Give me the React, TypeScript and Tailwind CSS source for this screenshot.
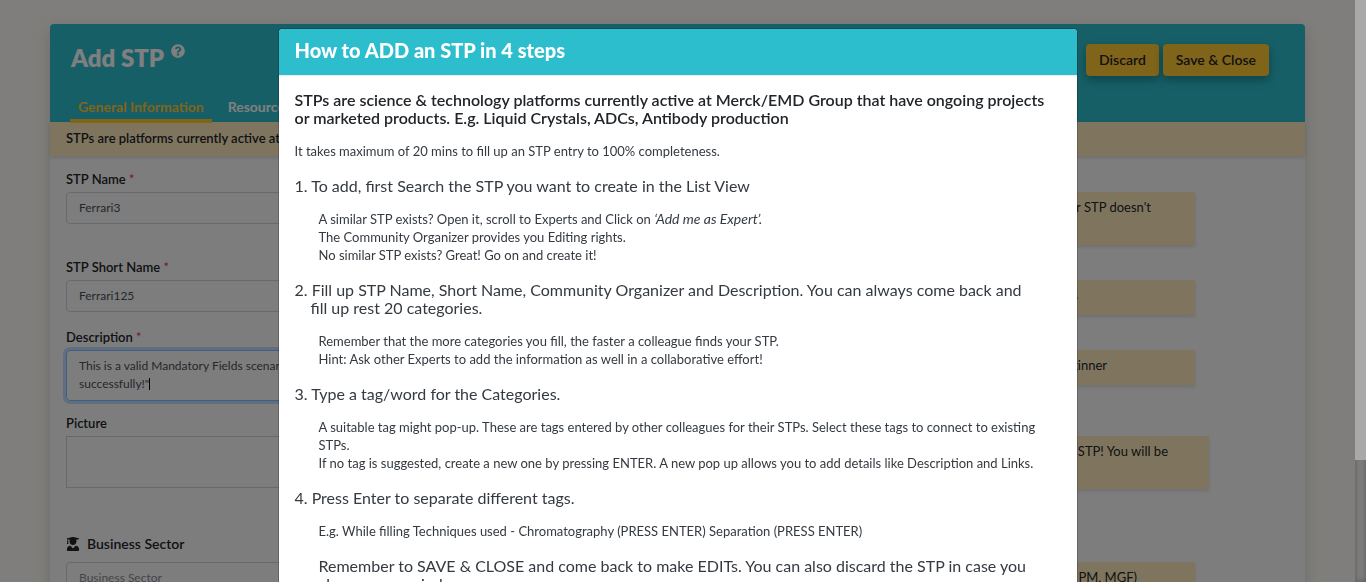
import { useId, type ReactNode } from "react";
import { FaQuestionCircle, FaUserGraduate } from "react-icons/fa";

function Hint({ children, className }: { children: ReactNode; className: string }) {
  return (
    <div className={`ml-8 flex-1 self-start bg-[#ffebbf] pt-[6px] pb-[11px] text-right leading-[18px] text-[#212529] shadow-[0_2px_4px_rgba(0,0,0,0.12)] ${className}`}>
      {children}
    </div>
  );
}

function Field({
  label,
  required,
  hint,
  className = "pr-[110px]",
  children,
}: {
  label: string;
  required?: boolean;
  hint?: ReactNode;
  className?: string;
  children: (id: string) => ReactNode;
}) {
  const id = useId();
  return (
    <div className={className}>
      <label htmlFor={id} className="mb-1 block leading-[18px] font-semibold text-[#212529]">
        {label} {required && <span className="font-normal text-[#dc3545]">*</span>}
      </label>
      <div className="flex">
        <div className="w-1/2">{children(id)}</div>
        {hint}
      </div>
    </div>
  );
}

const control =
  "block h-8 w-full rounded border border-[#ced4da] bg-transparent px-3 pb-px text-[12px] leading-[18px] text-[#495057] outline-none placeholder:text-[#868e96]";

function Step({ title, children }: { title: ReactNode; children: ReactNode }) {
  return (
    <li>
      <h3 className="mb-[15px] pr-6 pl-4 -indent-4 text-[16px] leading-[18px]">{title}</h3>
      <div className="mb-[17px] pl-6 leading-[18px]">{children}</div>
    </li>
  );
}

export default function App() {
  return (
    <div className="h-screen overflow-hidden bg-[#fffdf8] font-['Lato',sans-serif] text-[13px]">
      <main className="mr-[11px] px-[50px] pt-6">
        <div className="rounded bg-[#fbfbfb] shadow-[0_4px_16px_rgba(0,0,0,0.15)]">
          <header className="flex h-[98px] flex-col justify-between rounded-t bg-[#2dbecd]">
            <div className="flex items-start justify-between pt-5 pr-9 pl-[21px]">
              <h1 className="flex text-[24px] leading-7 font-extrabold text-white">
                Add STP
                <button aria-label="Help" className="ml-[7px] h-[14px]">
                  <FaQuestionCircle size={14} className="block" />
                </button>
              </h1>
              <div className="flex gap-1">
                <button className="h-8 rounded bg-[#ffc832] px-[13px] pb-[2px] text-[14px] font-semibold text-[#212529] shadow-[0_4px_10px_rgba(0,0,0,0.3)]">
                  Discard
                </button>
                <button className="h-8 rounded bg-[#ffc832] px-[13px] pb-[2px] text-[14px] font-semibold text-[#212529] shadow-[0_4px_10px_rgba(0,0,0,0.3)]">
                  Save &amp; Close
                </button>
              </div>
            </div>
            <nav className="-mb-px flex gap-2 pl-5 text-[14px] leading-[18px] font-bold">
              <a href="#general" className="border-b-4 border-[#ffc832] px-2 pb-[3px] text-[#ffc832]">
                General Information
              </a>
              <a href="#resources" className="px-2 text-white">
                Resources
              </a>
            </nav>
          </header>
          <p className="bg-[#ffebbf] px-4 pt-[7px] pb-[9px] leading-[18px] font-semibold text-[#212529] shadow-[0_2px_4px_rgba(0,0,0,0.12)]">
            STPs are platforms currently active at Merck/EMD Group
          </p>
          <form className="flex flex-col gap-[13px] pt-[14px] pl-4">
            <Field label="STP Name" required hint={<Hint className="min-h-[53px] pr-11">your STP doesn't</Hint>}>
              {(id) => <input id={id} defaultValue="Ferrari3" className={control} />}
            </Field>
            <Field label="STP Short Name" required hint={<Hint className="pr-[117px]">letters</Hint>}>
              {(id) => <input id={id} defaultValue="Ferrari125" className={control} />}
            </Field>
            <Field label="Description" required hint={<Hint className="pr-[88px]">beginner</Hint>}>
              {(id) => (
                <div className="relative">
                  <textarea
                    id={id}
                    defaultValue={"This is a valid Mandatory Fields scenario\nsuccessfully!\""}
                    className="block h-[51px] w-full resize-none overflow-hidden rounded border border-[#80bdff] px-3 py-[6px] text-[12px] leading-[18px] text-[#495057] shadow-[0_0_0_3px_#bfdeff] outline-none"
                  />
                  <span className="absolute top-[28px] left-[83px] h-3 w-px bg-black" />
                </div>
              )}
            </Field>
            <Field label="Picture" className="pr-24" hint={<Hint className="min-h-[53px] pr-[41px]">your STP! You will be</Hint>}>
              {(id) => (
                <input id={id} readOnly className="block h-[52px] w-full border border-[#ced4da] outline-none" />
              )}
            </Field>
            <div className="pt-[33px] pr-[110px] pb-8">
              <label htmlFor="sector" className="mb-[9px] flex items-center gap-[7px] text-[14px] leading-[18px] font-semibold text-[#212529]">
                <FaUserGraduate size={14} />
                Business Sector
              </label>
              <div className="flex">
                <div className="w-1/2">
                  <input id="sector" placeholder="Business Sector" className={control} />
                </div>
                <Hint className="pr-[58px]">(HC, PM, MGF)</Hint>
              </div>
            </div>
          </form>
        </div>
      </main>

      <div className="fixed inset-0 flex overflow-hidden bg-black/50">
        <div className="flex flex-1 items-start justify-center pt-7">
          <section
            role="dialog"
            aria-labelledby="dialog-title"
            className="w-full max-w-[800px] rounded-[5px] border border-black/20 bg-white bg-clip-padding"
          >
            <header className="rounded-t border-b border-[#e9ecef] bg-[#2dbecd] px-4 pt-[9px] pb-[13px]">
              <h2 id="dialog-title" className="text-[20px] leading-6 font-black text-white">
                How to ADD an STP in 4 steps
              </h2>
            </header>
            <div className="px-4 pt-[15px] text-[#343a40]">
              <p className="mb-[15px] text-[16px] leading-[18px] font-semibold text-[#212529]">
                STPs are science &amp; technology platforms currently active at Merck/EMD Group that have ongoing
                projects or marketed products. E.g. Liquid Crystals, ADCs, Antibody production
              </p>
              <p className="mb-[17px] leading-[18px]">
                It takes maximum of 20 mins to fill up an STP entry to 100% completeness.
              </p>
              <ol>
                <Step title="1. To add, first Search the STP you want to create in the List View">
                  <p>
                    A similar STP exists? Open it, scroll to Experts and Click on{" "}
                    <i className="text-[14px]">‘Add me as Expert’.</i>
                  </p>
                  <p>The Community Organizer provides you Editing rights.</p>
                  <p>No similar STP exists? Great! Go on and create it!</p>
                </Step>
                <Step title="2. Fill up STP Name, Short Name, Community Organizer and Description. You can always come back and fill up rest 20 categories.">
                  <p>Remember that the more categories you fill, the faster a colleague finds your STP.</p>
                  <p>Hint: Ask other Experts to add the information as well in a collaborative effort!</p>
                </Step>
                <Step title="3. Type a tag/word for the Categories.">
                  <p>
                    A suitable tag might pop-up. These are tags entered by other colleagues for their STPs. Select
                    these tags to connect to existing STPs.
                  </p>
                  <p>
                    If no tag is suggested, create a new one by pressing ENTER. A new pop up allows you to add details
                    like Description and Links.
                  </p>
                </Step>
                <Step title="4. Press Enter to separate different tags.">
                  <p>E.g. While filling Techniques used - Chromatography (PRESS ENTER) Separation (PRESS ENTER)</p>
                </Step>
              </ol>
              <p className="mb-4 pl-6 text-[16px] leading-[18px]">
                Remember to SAVE &amp; CLOSE and come back to make EDITs. You can also discard the STP in case you
                change your mind.
              </p>
            </div>
          </section>
        </div>
        <div className="w-[11px] shadow-[inset_0_0_6px_rgba(0,0,0,0.3)]">
          <div className="h-[79%] bg-[#a9a9a9]" />
        </div>
      </div>
    </div>
  );
}
